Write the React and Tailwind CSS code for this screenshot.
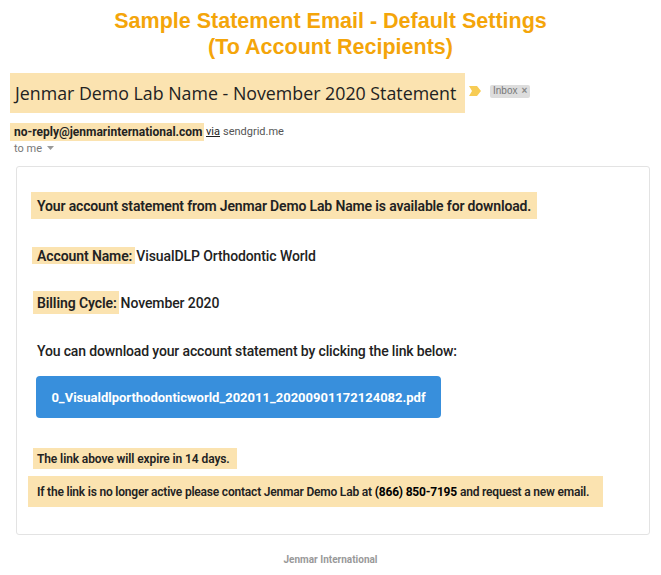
export default function App() {
  const hl = "bg-[#fbe3b0]";
  return (
    <div className="w-[661px] h-[575px] bg-white font-['Roboto',sans-serif] text-[#222]">
      <h1 className="pt-[8px] text-center font-['Liberation_Sans',Arial,sans-serif] text-[21.5px] font-bold leading-[26px] text-[#f4a50a]">
        Sample Statement Email - Default Settings
        <br />
        (To Account Recipients)
      </h1>

      <div className="mt-[13px] flex items-center pl-[10px]">
        <div className={`${hl} flex h-[40px] w-[455px] items-center pl-[5px] font-['Open_Sans',sans-serif] text-[17.8px] text-[#222]`}>
          Jenmar Demo Lab Name - November 2020 Statement
        </div>
        <svg width="12" height="10" viewBox="0 0 12 10" className="ml-[4px] mt-[-4px]">
          <path d="M0 0 H8 L12 5 L8 10 H0 L3 5 Z" fill="#f7cc55" />
        </svg>
        <span className="ml-[9px] mt-[-4px] flex h-[13px] items-center rounded-[2px] bg-[#dddddd] px-[3px] font-['Liberation_Sans',Arial,sans-serif] text-[10px] leading-none text-[#777]">
          Inbox <span className="ml-[4px] text-[10px] font-bold text-[#888]">×</span>
        </span>
      </div>

      <div className="mt-[10px] flex items-end pl-[10px] leading-none">
        <span className={`${hl} flex h-[18px] w-[194px] items-center pl-[4px] text-[12px] font-bold`}>
          no-reply@jenmarinternational.com
        </span>
        <span className="mb-[4px] ml-[2px] text-[11px] text-[#222] underline">via</span>
        <span className="mb-[4px] ml-[3px] text-[11px] text-[#555]">sendgrid.me</span>
      </div>
      <div className="mt-[1px] flex h-[12px] items-center pl-[14px] text-[11px] leading-none text-[#777]">
        to me
        <svg width="7" height="4" viewBox="0 0 7 4" className="ml-[5px]">
          <path d="M0 0 H7 L3.5 4 Z" fill="#999" />
        </svg>
      </div>

      <div className="ml-[16px] mt-[12px] flex w-[634px] flex-col items-start rounded-[3px] border border-[#e3e3e3] pb-[27px] pt-[25px] leading-none">
        <div className={`${hl} ml-[14px] flex h-[27px] items-center px-[6px] text-[14px] font-semibold tracking-[-0.15px]`}>
          Your account statement from Jenmar Demo Lab Name is available for download.
        </div>
        <div className="ml-[15px] mt-[28px] flex h-[17px] items-center text-[14px] tracking-[-0.1px]">
          <span className={`${hl} flex h-[17px] items-center pl-[5px] pr-[3px] font-semibold`}>Account Name:</span>
          <span className="ml-[1px] font-medium">VisualDLP Orthodontic World</span>
        </div>
        <div className="ml-[16px] mt-[27px] flex h-[23px] items-center text-[14px] tracking-[-0.1px]">
          <span className={`${hl} flex h-[23px] items-center pl-[4px] pr-[2px] font-semibold`}>Billing Cycle:</span>
          <span className="ml-[2px] font-medium">November 2020</span>
        </div>
        <p className="ml-[20px] mt-[27px] text-[14px] font-medium leading-[20px] tracking-[-0.15px]">
          You can download your account statement by clicking the link below:
        </p>
        <div className="ml-[19px] mt-[15px] flex h-[42px] w-[405px] items-center justify-center rounded-[4px] bg-[#388fdc] text-[13px] font-bold text-white">
          0_Visualdlporthodonticworld_202011_20200901172124082.pdf
        </div>
        <div className={`${hl} ml-[16px] mt-[30px] flex h-[21px] items-center pl-[4px] pr-[7px] text-[12px] font-semibold tracking-[-0.1px]`}>
          The link above will expire in 14 days.
        </div>
        <div className={`${hl} ml-[11px] mt-[7px] flex h-[31px] w-[575px] items-center pl-[9px] text-[12px] font-semibold tracking-[-0.2px]`}>
          If the link is no longer active please contact Jenmar Demo Lab at
          <span className="ml-[3px] font-bold text-black">(866) 850-7195</span>
          <span className="ml-[3px]">and request a new email.</span>
        </div>
      </div>

      <p className="mt-[18px] text-center text-[10px] font-bold leading-[14px] text-[#999]">Jenmar International</p>
    </div>
  );
}
